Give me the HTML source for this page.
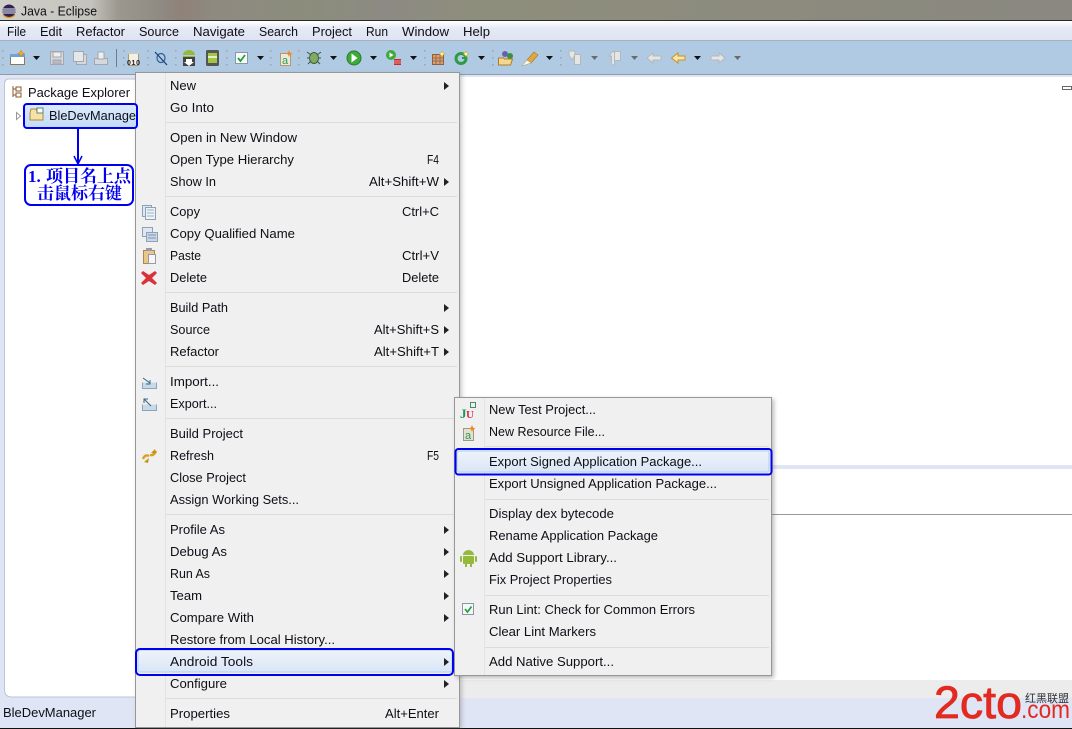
<!DOCTYPE html>
<html><head><meta charset="utf-8"><title>Java - Eclipse</title>
<style>
html,body{margin:0;padding:0;background:#fff}
svg{display:block}
text{font-family:"Liberation Sans","Noto Sans CJK SC",sans-serif;font-size:12.6px;fill:#0e0e16}
.g{fill:#a9a390}
.cj{font-family:"Liberation Serif","Noto Serif CJK SC",serif;font-weight:700;font-size:17px;fill:#0000f0}
</style></head><body>
<svg width="1072" height="729" viewBox="0 0 1072 729" xmlns="http://www.w3.org/2000/svg">
<defs>
<linearGradient id="tb" x1="0" x2="1" y1="0" y2="0">
<stop offset="0" stop-color="#d0d0ca"/><stop offset=".085" stop-color="#c4c3bc"/><stop offset=".11" stop-color="#9c9890"/><stop offset=".15" stop-color="#8f8a82"/><stop offset=".17" stop-color="#8f8279"/><stop offset=".2" stop-color="#8e8a80"/><stop offset=".3" stop-color="#8b8d7c"/><stop offset=".36" stop-color="#8c8a84"/><stop offset=".44" stop-color="#8e8e7c"/><stop offset="1" stop-color="#8a8880"/>
</linearGradient>
<linearGradient id="mb" x1="0" x2="0" y1="0" y2="1"><stop offset="0" stop-color="#fff"/><stop offset=".35" stop-color="#e6eaf6"/><stop offset="1" stop-color="#dde3f2"/></linearGradient>
<linearGradient id="hl" x1="0" x2="0" y1="0" y2="1"><stop offset="0" stop-color="#eef3fa"/><stop offset="1" stop-color="#dae6f6"/></linearGradient>
<linearGradient id="hl2" x1="0" x2="0" y1="0" y2="1"><stop offset="0" stop-color="#dceafc"/><stop offset="1" stop-color="#c4dcf8"/></linearGradient>
<filter id="bl"><feGaussianBlur stdDeviation="2"/></filter>
</defs>

<!-- window frame -->
<rect width="1072" height="729" fill="#dfe5f5"/>
<rect width="1072" height="20" fill="url(#tb)"/>
<rect y="20" width="1072" height="1" fill="#2a2a2a"/>
<rect y="21" width="1072" height="20" fill="url(#mb)"/>
<rect y="40" width="1072" height="1" fill="#a9b0bd"/>
<rect y="41" width="1072" height="33" fill="#b0cae3"/>
<rect y="74" width="1072" height="1" fill="#8e9aa8"/>
<rect y="75" width="1072" height="2" fill="#dfe5f5"/>
<rect y="77" x="440" width="632" height="603" fill="#fff"/>
<rect x="772" y="465" width="300" height="4" fill="#e0e5f5"/>
<rect x="772" y="514" width="300" height="1" fill="#989898"/>
<rect x="440" y="680" width="632" height="18" fill="#ececec"/>
<rect x="1062.500" y="86.500" width="9" height="3" fill="#fff" stroke="#666" stroke-width="1"/>
<rect y="728" width="1072" height="1" fill="#111"/>

<!-- title -->
<circle cx="9" cy="11" r="6.500" fill="#2c2255"/>
<path d="M3 9h12M2.600 11h12.800M3 13h12" stroke="#eee" stroke-width="1"/>
<path d="M3 15q6 5 12 0" stroke="#e8951e" stroke-width="1.200" fill="none"/>
<text x="21" y="15.500" textLength="76" lengthAdjust="spacingAndGlyphs">Java - Eclipse</text>

<!-- menu bar -->
<text x="7" y="36" textLength="19" lengthAdjust="spacingAndGlyphs">File</text>
<text x="40" y="36" textLength="22" lengthAdjust="spacingAndGlyphs">Edit</text>
<text x="76" y="36" textLength="49" lengthAdjust="spacingAndGlyphs">Refactor</text>
<text x="139" y="36" textLength="40" lengthAdjust="spacingAndGlyphs">Source</text>
<text x="193" y="36" textLength="52" lengthAdjust="spacingAndGlyphs">Navigate</text>
<text x="259" y="36" textLength="39" lengthAdjust="spacingAndGlyphs">Search</text>
<text x="312" y="36" textLength="40" lengthAdjust="spacingAndGlyphs">Project</text>
<text x="366" y="36" textLength="22" lengthAdjust="spacingAndGlyphs">Run</text>
<text x="402" y="36" textLength="47" lengthAdjust="spacingAndGlyphs">Window</text>
<text x="463" y="36" textLength="27" lengthAdjust="spacingAndGlyphs">Help</text>

<!-- toolbar grips -->
<g class="g">
<rect x="2" y="50" width="1.500" height="1.500"/><rect x="2" y="57" width="1.500" height="1.500"/><rect x="2" y="64" width="1.500" height="1.500"/>
<rect x="123" y="50" width="1.500" height="1.500"/><rect x="123" y="57" width="1.500" height="1.500"/><rect x="123" y="64" width="1.500" height="1.500"/>
<rect x="147" y="50" width="1.500" height="1.500"/><rect x="147" y="57" width="1.500" height="1.500"/><rect x="147" y="64" width="1.500" height="1.500"/>
<rect x="175" y="50" width="1.500" height="1.500"/><rect x="175" y="57" width="1.500" height="1.500"/><rect x="175" y="64" width="1.500" height="1.500"/>
<rect x="226" y="50" width="1.500" height="1.500"/><rect x="226" y="57" width="1.500" height="1.500"/><rect x="226" y="64" width="1.500" height="1.500"/>
<rect x="270" y="50" width="1.500" height="1.500"/><rect x="270" y="57" width="1.500" height="1.500"/><rect x="270" y="64" width="1.500" height="1.500"/>
<rect x="298" y="50" width="1.500" height="1.500"/><rect x="298" y="57" width="1.500" height="1.500"/><rect x="298" y="64" width="1.500" height="1.500"/>
<rect x="424" y="50" width="1.500" height="1.500"/><rect x="424" y="57" width="1.500" height="1.500"/><rect x="424" y="64" width="1.500" height="1.500"/>
<rect x="492" y="50" width="1.500" height="1.500"/><rect x="492" y="57" width="1.500" height="1.500"/><rect x="492" y="64" width="1.500" height="1.500"/>
<rect x="560" y="50" width="1.500" height="1.500"/><rect x="560" y="57" width="1.500" height="1.500"/><rect x="560" y="64" width="1.500" height="1.500"/>
</g>
<rect x="116" y="49" width="1" height="18" fill="#6f7d8b"/>

<!-- dropdown arrows -->
<g fill="#111">
<path d="M33 56h7l-3.500 4z"/><path d="M257 56h7l-3.500 4z"/><path d="M330 56h7l-3.500 4z"/><path d="M370 56h7l-3.500 4z"/><path d="M410 56h7l-3.500 4z"/><path d="M478 56h7l-3.500 4z"/><path d="M546 56h7l-3.500 4z"/><path d="M694 56h7l-3.500 4z"/>
</g>
<g fill="#6c6c6c">
<path d="M591 56h7l-3.500 4z"/><path d="M631 56h7l-3.500 4z"/><path d="M734 56h7l-3.500 4z"/>
</g>

<!-- new -->
<rect x="10.500" y="54.500" width="14" height="10" fill="#fff" stroke="#8a7a55"/><rect x="10" y="54" width="15" height="3" fill="#6fa0d8"/>
<path d="M21 50l1 2.500 2.500 1-2.500 1-1 2.500-1-2.500-2.500-1 2.500-1z" fill="#f0b030" stroke="#c88000" stroke-width=".5"/>
<!-- save -->
<g fill="#d5d9dc" stroke="#a4a8ac"><rect x="50.500" y="51.500" width="13" height="13"/><rect x="53" y="52" width="8" height="5" fill="#eee"/><rect x="53" y="60" width="8" height="4" fill="#b8bcc0"/>
<rect x="76.500" y="54.500" width="10" height="10"/><rect x="73.500" y="51.500" width="10" height="10" fill="#e5e7ea"/>
<rect x="94.500" y="58.500" width="13" height="6"/><rect x="98" y="52" width="6" height="7" fill="#eee"/></g>
<!-- 010 -->
<rect x="128.500" y="51.500" width="10" height="14" fill="#f4f0e4" stroke="#a89a70"/><rect x="128" y="51" width="11" height="3" fill="#c0c8d8"/>
<text x="127" y="65" style="font-size:7px;font-weight:700;fill:#223" textLength="13">010</text>
<!-- mark -->
<ellipse cx="161" cy="58" rx="4" ry="4.500" fill="none" stroke="#30608c" stroke-width="1.200"/><path d="M155 52l12 13" stroke="#1b3a78" stroke-width="1.200"/>
<!-- android download -->
<path d="M183 55a6 5 0 0 1 12 0z" fill="#94b93c"/><rect x="183" y="56" width="12" height="1" fill="#94b93c"/>
<rect x="183" y="57" width="12" height="9" fill="#444"/><path d="M186 59h6v3h2l-5 4-5-4h2z" fill="#fff"/>
<!-- AVD -->
<rect x="206" y="50" width="13" height="16" rx="1.500" fill="#555"/><rect x="208" y="53" width="9" height="10" fill="#a5c443"/><rect x="208" y="56" width="9" height="2" fill="#e4efc0"/>
<!-- check -->
<rect x="235.500" y="52.500" width="12" height="11" fill="#f8fafc" stroke="#8698aa"/><path d="M238 58l2.500 3 4.500-6" stroke="#23a233" stroke-width="1.800" fill="none"/>
<!-- android xml -->
<rect x="280.500" y="53.500" width="10" height="12" fill="#eee9d8" stroke="#b09a70"/><text x="282" y="64" style="font-size:11px;fill:#2a9a50">a</text>
<path d="M289 50l1 2.500 2.500 1-2.500 1-1 2.500-1-2.500-2.500-1 2.500-1z" fill="#f08a20"/>
<!-- bug -->
<ellipse cx="314" cy="58" rx="4.500" ry="5.500" fill="#84aa62" stroke="#39603a"/><path d="M307 52l4 3M321 52l-4 3M307 58h3M318 58h3M308 64l3-3M320 64l-3-3" stroke="#3e5a3a" stroke-width="1"/>
<!-- run -->
<circle cx="354" cy="58" r="7" fill="#3eaa3a" stroke="#2a7a2c"/><path d="M351.500 53.500l6 4.500-6 4.500z" fill="#fff"/>
<!-- run ext -->
<circle cx="391" cy="55" r="5" fill="#3eaa3a"/><path d="M389.500 52.500l4 2.500-4 2.500z" fill="#fff"/>
<rect x="394" y="59" width="7" height="6" fill="#cc2a2a"/><path d="M394 61h7M394 63h7" stroke="#fff" stroke-width=".6"/>
<!-- grid plus -->
<rect x="432.500" y="54.500" width="11" height="10" fill="#d8a070" stroke="#8f5f3f"/><path d="M436 54v11M440 54v11M432 58h12M432 61h12" stroke="#8f5f3f" stroke-width=".8"/>
<path d="M442 51l1 2 2 1-2 1-1 2-1-2-2-1 2-1z" fill="#fff3a0" stroke="#c8a020" stroke-width=".5"/>
<!-- G -->
<circle cx="461" cy="58.500" r="5" fill="none" stroke="#2e9a48" stroke-width="3"/><rect x="462" y="57" width="5" height="2" fill="#2e9a48"/>
<path d="M466 51l1 2 2 1-2 1-1 2-1-2-2-1 2-1z" fill="#fff3a0" stroke="#c8a020" stroke-width=".5"/>
<!-- folder -->
<circle cx="505" cy="54" r="3" fill="#6a60b0"/><circle cx="510" cy="56" r="3" fill="#3c9040"/>
<path d="M498.500 58h5l1 1h8l-2 6h-12z" fill="#f4d890" stroke="#b07c28"/>
<!-- pen -->
<path d="M527 60l7-8 4 3-7 8z" fill="#e0a840" stroke="#a87820" stroke-width=".6"/><path d="M522 66l5-6 4 3z" fill="#fff8d8" stroke="#998" stroke-width=".5"/>
<!-- next/prev annotation -->
<g fill="#e4e6e6" stroke="#b4b8b8"><path d="M569 55l3 5 3-5 0-4h-6z"/><rect x="574.500" y="54.500" width="6" height="10"/>
<path d="M609 56l4-5 4 5h-2.500v9h-3v-9z"/><rect x="614.500" y="51.500" width="6" height="9"/>
<path d="M647 58l6-5v3h8v4h-8v3z"/>
<path d="M725 58l-6-5v3h-8v4h8v3z"/></g>
<path d="M671.500 58l6.500-5v3h7v4h-7v3z" fill="#fbe8a8" stroke="#c89020"/>

<!-- left panel -->
<path d="M4.500 84q0-5 5-5H440V697H12q-7.500 0-7.500-7.500z" fill="#fff" stroke="#bcc6d4"/>
<path d="M13 86v11M13 89h3M13 95h3M16 87h5v4h-5zM16 93h5v4h-5z" stroke="#8a5a28" fill="none" stroke-width="1"/>
<text x="28" y="97" textLength="102" lengthAdjust="spacingAndGlyphs">Package Explorer</text>
<path d="M16.500 112.500l4 3.500-4 3.500z" fill="#fff" stroke="#999"/>

<!-- main menu -->
<rect x="137" y="74" width="325" height="655" fill="#666" opacity=".35" filter="url(#bl)"/>
<rect x="135.500" y="72.500" width="324" height="655" fill="#f0f0f0" stroke="#979797"/>
<rect x="165" y="73" width="1" height="654" fill="#e2e3e3"/>
<g fill="#dcdcdc">
<rect x="166" y="122" width="291" height="1"/><rect x="166" y="196" width="291" height="1"/><rect x="166" y="292" width="291" height="1"/><rect x="166" y="366" width="291" height="1"/><rect x="166" y="418" width="291" height="1"/><rect x="166" y="514" width="291" height="1"/><rect x="166" y="698" width="291" height="1"/>
</g>
<rect x="138" y="650" width="314" height="22" rx="2" fill="url(#hl)" stroke="#aecff7"/>

<g>
<text x="170" y="90" textLength="26" lengthAdjust="spacingAndGlyphs">New</text>
<text x="170" y="112" textLength="44" lengthAdjust="spacingAndGlyphs">Go Into</text>
<text x="170" y="142" textLength="127" lengthAdjust="spacingAndGlyphs">Open in New Window</text>
<text x="170" y="164" textLength="124" lengthAdjust="spacingAndGlyphs">Open Type Hierarchy</text>
<text x="170" y="186" textLength="46" lengthAdjust="spacingAndGlyphs">Show In</text>
<text x="170" y="216" textLength="30" lengthAdjust="spacingAndGlyphs">Copy</text>
<text x="170" y="238" textLength="125" lengthAdjust="spacingAndGlyphs">Copy Qualified Name</text>
<text x="170" y="260" textLength="31" lengthAdjust="spacingAndGlyphs">Paste</text>
<text x="170" y="282" textLength="37" lengthAdjust="spacingAndGlyphs">Delete</text>
<text x="170" y="312" textLength="58" lengthAdjust="spacingAndGlyphs">Build Path</text>
<text x="170" y="334" textLength="40" lengthAdjust="spacingAndGlyphs">Source</text>
<text x="170" y="356" textLength="49" lengthAdjust="spacingAndGlyphs">Refactor</text>
<text x="170" y="386" textLength="49" lengthAdjust="spacingAndGlyphs">Import...</text>
<text x="170" y="408" textLength="47" lengthAdjust="spacingAndGlyphs">Export...</text>
<text x="170" y="438" textLength="73" lengthAdjust="spacingAndGlyphs">Build Project</text>
<text x="170" y="460" textLength="44" lengthAdjust="spacingAndGlyphs">Refresh</text>
<text x="170" y="482" textLength="76" lengthAdjust="spacingAndGlyphs">Close Project</text>
<text x="170" y="504" textLength="129" lengthAdjust="spacingAndGlyphs">Assign Working Sets...</text>
<text x="170" y="534" textLength="55" lengthAdjust="spacingAndGlyphs">Profile As</text>
<text x="170" y="556" textLength="57" lengthAdjust="spacingAndGlyphs">Debug As</text>
<text x="170" y="578" textLength="40" lengthAdjust="spacingAndGlyphs">Run As</text>
<text x="170" y="600" textLength="32" lengthAdjust="spacingAndGlyphs">Team</text>
<text x="170" y="622" textLength="84" lengthAdjust="spacingAndGlyphs">Compare With</text>
<text x="170" y="644" textLength="165" lengthAdjust="spacingAndGlyphs">Restore from Local History...</text>
<text x="170" y="666" textLength="83" lengthAdjust="spacingAndGlyphs">Android Tools</text>
<text x="170" y="688" textLength="57" lengthAdjust="spacingAndGlyphs">Configure</text>
<text x="170" y="718" textLength="60" lengthAdjust="spacingAndGlyphs">Properties</text>
<text x="427" y="164" textLength="12" lengthAdjust="spacingAndGlyphs">F4</text>
<text x="369" y="186" textLength="70" lengthAdjust="spacingAndGlyphs">Alt+Shift+W</text>
<text x="402" y="216" textLength="37" lengthAdjust="spacingAndGlyphs">Ctrl+C</text>
<text x="402" y="260" textLength="37" lengthAdjust="spacingAndGlyphs">Ctrl+V</text>
<text x="402" y="282" textLength="37" lengthAdjust="spacingAndGlyphs">Delete</text>
<text x="374" y="334" textLength="65" lengthAdjust="spacingAndGlyphs">Alt+Shift+S</text>
<text x="374" y="356" textLength="65" lengthAdjust="spacingAndGlyphs">Alt+Shift+T</text>
<text x="427" y="460" textLength="12" lengthAdjust="spacingAndGlyphs">F5</text>
<text x="385" y="718" textLength="54" lengthAdjust="spacingAndGlyphs">Alt+Enter</text>
</g>
<g fill="#222">
<path d="M444 82l5 4-5 4zM444 178l5 4-5 4zM444 304l5 4-5 4zM444 326l5 4-5 4zM444 348l5 4-5 4zM444 526l5 4-5 4zM444 548l5 4-5 4zM444 570l5 4-5 4zM444 592l5 4-5 4zM444 614l5 4-5 4zM444 658l5 4-5 4zM444 680l5 4-5 4z"/>
</g>

<!-- menu icons -->
<g fill="#dfe8f2" stroke="#8ea2b6">
<rect x="142.500" y="205.500" width="9" height="11"/><rect x="145.500" y="207.500" width="10" height="12" fill="#eef3f8"/>
<path d="M147 210h7M147 213h7M147 216h7" stroke="#9fb0c0" fill="none"/>
<rect x="142.500" y="227.500" width="10" height="9"/><rect x="146.500" y="232.500" width="11" height="9" fill="#c8d8e8"/>
<path d="M148 235h8M148 238h8" stroke="#7f95aa" fill="none"/>
</g>
<rect x="143.500" y="250.500" width="11" height="13" fill="#e8c888" stroke="#a88850"/><rect x="148.500" y="254.500" width="7" height="9" fill="#f4f6f8" stroke="#99a"/><rect x="146" y="248" width="6" height="3" fill="#99a"/>
<path d="M143 271l6 4 6-4 2 2-5 5 5 5-2 2-6-4-6 4-2-2 5-5-5-5z" fill="#d8333a"/>
<path d="M142.500 382.500v6h14v-6M142 388.500h15" fill="#c8dae8" stroke="#8ba4ba"/><path d="M143 378l7 5M150 380v4h-4" fill="none" stroke="#35658a"/>
<path d="M142.500 404.500v6h14v-6M142 410.500h15" fill="#c8dae8" stroke="#8ba4ba"/><path d="M151 406l-7-7M144 403v-4h4" fill="none" stroke="#35658a"/>
<path d="M143 459q2-5 6-3M156 451q-2 5-6 4" fill="none" stroke="#d8a020" stroke-width="2.400"/>
<path d="M144 462l5-4-1 5zM155 449l-4 4 5 0z" fill="#c89018"/>

<!-- highlights -->
<rect x="25" y="105" width="111" height="22" rx="2" fill="url(#hl2)"/>
<path d="M30 113v7h13v-9h-6l-1-2h-5z" fill="#f6e2a4" stroke="#a88848"/><rect x="37" y="108" width="6" height="5" fill="#fff" stroke="#5a8a70"/>
<text x="49" y="120" textLength="87" lengthAdjust="spacingAndGlyphs">BleDevManage</text>
<rect x="24" y="104" width="113" height="24" rx="3" fill="none" stroke="#0000f0" stroke-width="2"/>
<path d="M78 128V164" stroke="#0000f0" stroke-width="2"/><path d="M74 156l4 8 4-8" fill="none" stroke="#0000f0" stroke-width="1.500"/>
<rect x="25" y="165" width="108" height="40" rx="6" fill="#fff" stroke="#0000f0" stroke-width="2"/>
<text class="cj" x="28" y="182">1.</text>
<text class="cj" x="46" y="182" textLength="85">项目名上点</text>
<text class="cj" x="37" y="199" textLength="85">击鼠标右键</text>
<rect x="136" y="649" width="317" height="26" rx="4" fill="none" stroke="#0000f0" stroke-width="2"/>

<!-- status -->
<text x="3" y="717" textLength="93" lengthAdjust="spacingAndGlyphs">BleDevManager</text>

<!-- submenu -->
<rect x="456" y="399" width="318" height="279" fill="#666" opacity=".45" filter="url(#bl)"/>
<rect x="454.500" y="397.500" width="317" height="278" fill="#f0f0f0" stroke="#979797"/>
<rect x="484" y="398" width="1" height="277" fill="#e2e3e3"/>
<g fill="#dcdcdc">
<rect x="485" y="446" width="284" height="1"/><rect x="485" y="499" width="284" height="1"/><rect x="485" y="595" width="284" height="1"/><rect x="485" y="647" width="284" height="1"/>
</g>
<rect x="457" y="451" width="312" height="21" rx="2" fill="url(#hl)" stroke="#aecff7"/>
<rect x="455.500" y="449" width="316" height="25.500" rx="3" fill="none" stroke="#0000f0" stroke-width="2"/>
<text x="489" y="414" textLength="107" lengthAdjust="spacingAndGlyphs">New Test Project...</text>
<text x="489" y="436" textLength="116" lengthAdjust="spacingAndGlyphs">New Resource File...</text>
<text x="489" y="466" textLength="213" lengthAdjust="spacingAndGlyphs">Export Signed Application Package...</text>
<text x="489" y="488" textLength="228" lengthAdjust="spacingAndGlyphs">Export Unsigned Application Package...</text>
<text x="489" y="518" textLength="125" lengthAdjust="spacingAndGlyphs">Display dex bytecode</text>
<text x="489" y="540" textLength="169" lengthAdjust="spacingAndGlyphs">Rename Application Package</text>
<text x="489" y="562" textLength="128" lengthAdjust="spacingAndGlyphs">Add Support Library...</text>
<text x="489" y="584" textLength="123" lengthAdjust="spacingAndGlyphs">Fix Project Properties</text>
<text x="489" y="614" textLength="206" lengthAdjust="spacingAndGlyphs">Run Lint: Check for Common Errors</text>
<text x="489" y="636" textLength="107" lengthAdjust="spacingAndGlyphs">Clear Lint Markers</text>
<text x="489" y="666" textLength="125" lengthAdjust="spacingAndGlyphs">Add Native Support...</text>
<!-- submenu icons -->
<text x="460" y="418" style="font-family:'Liberation Serif',serif;font-size:13px;font-weight:700;fill:#1a9a50">J</text>
<text x="466" y="418" style="font-family:'Liberation Serif',serif;font-size:11px;font-weight:700;fill:#d83050">U</text>
<rect x="470.500" y="402.500" width="5" height="5" fill="none" stroke="#4a8a6a"/>
<rect x="463.500" y="428.500" width="10" height="12" fill="#e4e0d0" stroke="#9a9a88"/><text x="465" y="439" style="font-size:11px;fill:#2a9a50">a</text>
<path d="M472 425l1 2.500 2.500 1-2.500 1-1 2.500-1-2.500-2.500-1 2.500-1z" fill="#f08a20"/>
<path d="M463 555a5.500 5 0 0 1 11 0z" fill="#94b93c"/><rect x="463" y="556" width="11" height="8" rx="1" fill="#94b93c"/><rect x="460" y="556" width="2" height="6" rx="1" fill="#94b93c"/><rect x="475" y="556" width="2" height="6" rx="1" fill="#94b93c"/><rect x="465" y="564" width="2" height="3" fill="#94b93c"/><rect x="470" y="564" width="2" height="3" fill="#94b93c"/>
<rect x="462.500" y="603.500" width="11" height="11" fill="#f4f8fa" stroke="#8898a8"/><path d="M465 609l2.500 3 4-5.500" stroke="#23a233" stroke-width="1.700" fill="none"/>

<!-- watermark -->
<text x="934" y="718" textLength="88" lengthAdjust="spacingAndGlyphs" style="font-size:45px;fill:#e22a20;stroke:#e22a20;stroke-width:.8">2cto</text>
<text x="1021" y="718" textLength="49" lengthAdjust="spacingAndGlyphs" style="font-size:25px;fill:#e22a20">.com</text>
<text x="1025" y="702" textLength="44" style="font-size:11px;fill:#333">红黑联盟</text>
</svg>
</body></html>
